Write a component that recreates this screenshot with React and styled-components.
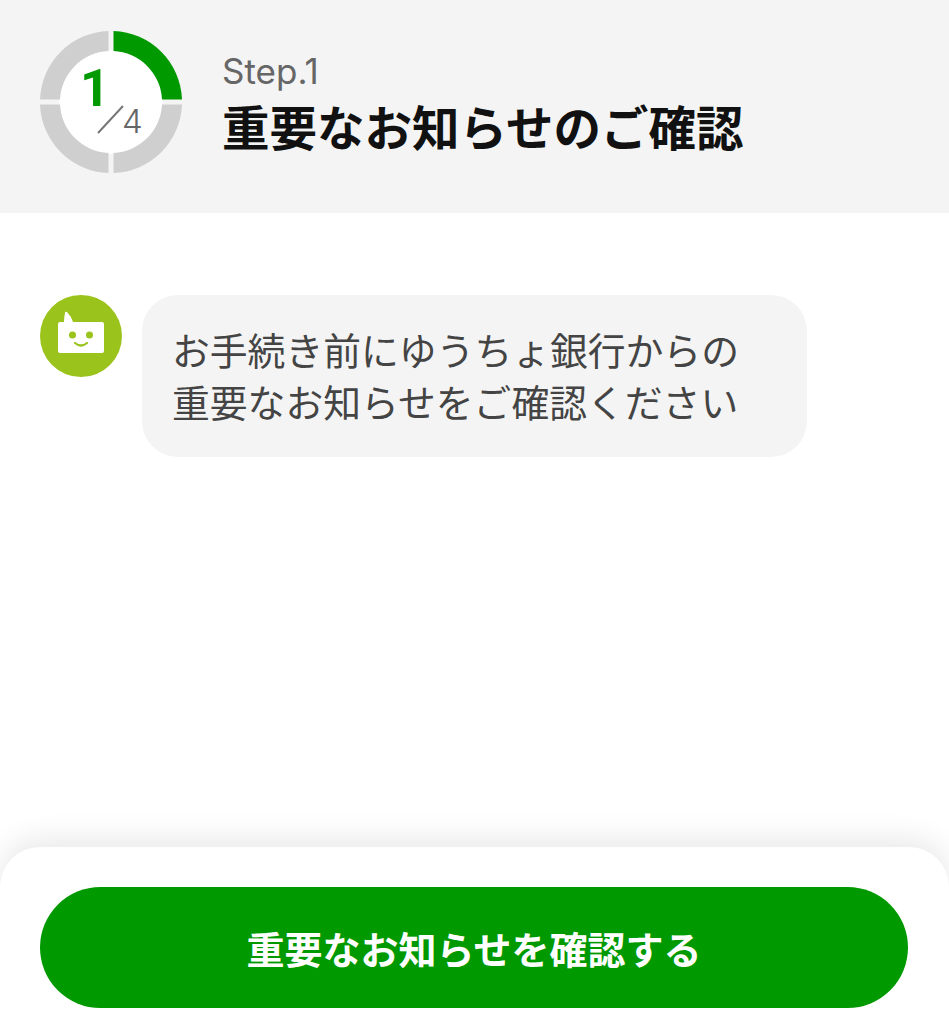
import React from 'react';
import styled, {createGlobalStyle} from 'styled-components';

const GlobalStyle = createGlobalStyle`
    html, body {
        margin: 0;
        padding: 0;
        background: #fff;
    }
    body {
        font-family: "Noto Sans CJK JP", "Noto Sans", sans-serif;
    }
`;

const Page = styled.div`
    width: 949px;
    height: 1024px;
    display: flex;
    flex-direction: column;
    overflow: hidden;
    background: #fff;
`;

const Header = styled.header`
    height: 213px;
    padding: 31px 0 0 40px;
    box-sizing: border-box;
    display: flex;
    align-items: flex-start;
    gap: 40px;
    background: #f4f4f4;
`;

const StepRing = styled.svg`
    width: 143px;
    height: 142px;
    flex: none;
`;

const HeaderText = styled.div`
    display: flex;
    flex-direction: column;
    padding-top: 17px;
    margin-left: -1px;
`;

const StepLabel = styled.div`
    font-family: "Inter", "Noto Sans", sans-serif;
    font-size: 35px;
    line-height: 46px;
    color: #666;
`;

const Title = styled.h1`
    margin: 0;
    font-size: 47.5px;
    font-weight: 700;
    line-height: 63px;
    color: #111;
    white-space: nowrap;
`;

const Main = styled.main`
    flex: 1;
    padding: 82px 0 0 40px;
    display: flex;
    align-items: flex-start;
    gap: 20px;
`;

const Avatar = styled.svg`
    width: 82px;
    height: 82px;
    flex: none;
`;

const Bubble = styled.div`
    width: 665px;
    height: 162px;
    box-sizing: border-box;
    padding: 28px 0 0 30px;
    border-radius: 36px;
    background: #f4f4f4;
    font-size: 37.8px;
    line-height: 52px;
    color: #444;
    white-space: nowrap;
`;

const Footer = styled.footer`
    height: 177px;
    box-sizing: border-box;
    padding: 40px 41px 0 40px;
    border-radius: 40px 40px 0 0;
    background: #fff;
    box-shadow: 0 -8px 30px rgba(0, 0, 0, 0.09);
`;

const ConfirmButton = styled.button`
    display: block;
    width: 100%;
    height: 121px;
    border: none;
    border-radius: 61px;
    background: #009900;
    color: #fff;
    font-family: inherit;
    font-size: 38px;
    font-weight: 700;
`;

// one quarter of the ring, rotated into place
const quarter = "M73.5 0A71 71 0 0 1 142 68.5H122A51 51 0 0 0 73.5 20Z";

function Progress() {
    return (
        <StepRing viewBox="0 0 143 142">
            <circle cx="71" cy="71" r="52" fill="#fff"/>
            <path d={quarter} fill="#009900"/>
            <path d={quarter} fill="#cfcfcf" transform="rotate(90 71 71)"/>
            <path d={quarter} fill="#cfcfcf" transform="rotate(180 71 71)"/>
            <path d={quarter} fill="#cfcfcf" transform="rotate(270 71 71)"/>
            <text x="55" y="75" textAnchor="middle" fontFamily="Roboto, sans-serif" fontWeight="700" fontSize="52" fill="#009900">1</text>
            <line x1="58" y1="102" x2="83" y2="75" stroke="#777" strokeWidth="2"/>
            <text x="82" y="102" fontFamily="Inter, sans-serif" fontWeight="300" fontSize="33" fill="#666">4</text>
        </StepRing>
    );
}

function BotIcon() {
    return (
        <Avatar viewBox="0 0 82 82">
            <circle cx="41" cy="41" r="41" fill="#9ac31c"/>
            <path d="M25 18Q25 16 27 17Q31 21 33 27H62Q64 27 64 29V56Q64 58 62 58H20Q18 58 18 56V29Q18 27 20 27H24Q24 22 25 18Z" fill="#fff"/>
            <circle cx="32.5" cy="40" r="3.5" fill="#9ac31c"/>
            <circle cx="49.5" cy="40" r="3.5" fill="#9ac31c"/>
            <path d="M35 48Q41 53 47 48" fill="none" stroke="#9ac31c" strokeWidth="2.2" strokeLinecap="round"/>
        </Avatar>
    );
}

export default function App() {
    return (
        <Page>
            <GlobalStyle/>
            <Header>
                <Progress/>
                <HeaderText>
                    <StepLabel>Step.1</StepLabel>
                    <Title>重要なお知らせのご確認</Title>
                </HeaderText>
            </Header>
            <Main>
                <BotIcon/>
                <Bubble>
                    お手続き前にゆうちょ銀行からの<br/>
                    重要なお知らせをご確認ください
                </Bubble>
            </Main>
            <Footer>
                <ConfirmButton>重要なお知らせを確認する</ConfirmButton>
            </Footer>
        </Page>
    );
}
